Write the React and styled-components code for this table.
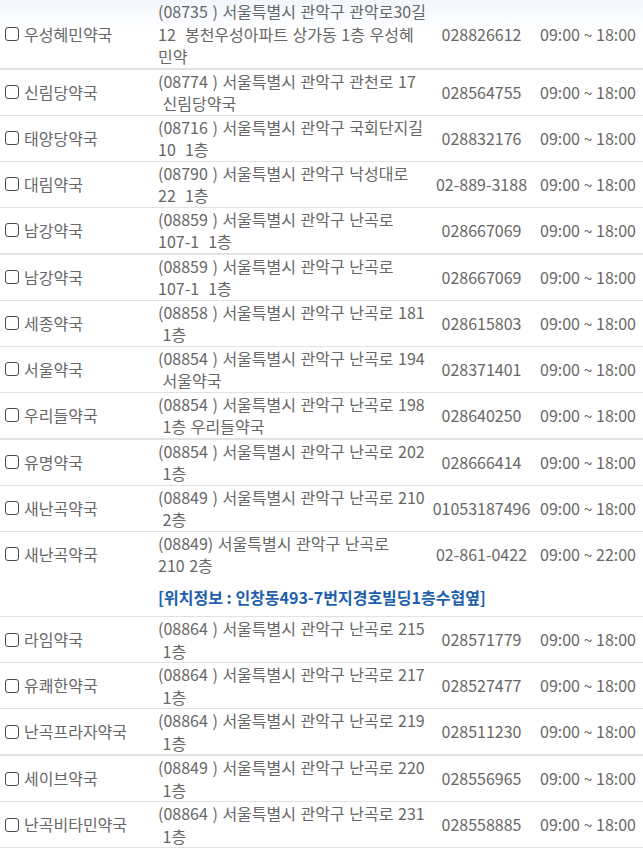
import React from "react";
import styled, { createGlobalStyle } from "styled-components";

const Global = createGlobalStyle`
  html, body { margin: 0; padding: 0; background: #fff; }
  body { font-family: "Noto Sans CJK KR", "Noto Sans", sans-serif; }
`;

const Wrap = styled.div`
  width: 643px;
  background: linear-gradient(to bottom, #f2f7fd 0px, #f7fafe 14px, rgba(255, 255, 255, 0) 30px) no-repeat;
`;

const Table = styled.table`
  width: 643px;
  border-collapse: collapse;
  table-layout: fixed;
  color: #676767;
  font-size: 16px;
  line-height: 22.5px;
`;

const Row = styled.tr`
  border-bottom: ${(p) => (p.$noBorder ? "none" : p.$thick ? "2px solid #e2e2e2" : "1px solid #e2e2e2")};
`;

const NameCell = styled.td`
  width: 150px;
  padding: 0 0 0 5px;
  vertical-align: middle;
  white-space: nowrap;
`;

const NameInner = styled.label`
  display: flex;
  align-items: center;
  gap: 5px;
`;

const Check = styled.input.attrs({ type: "checkbox" })`
  appearance: none;
  margin: 0;
  width: 14px;
  height: 14px;
  border: 1.5px solid #4a4a4a;
  border-radius: 3px;
  background: #fff;
  box-sizing: border-box;
  flex: none;
`;

const AddrCell = styled.td`
  width: 272px;
  padding: 0 0 0 3px;
  vertical-align: middle;
  word-spacing: 1px;
`;

const Line = styled.div`
  white-space: pre;
`;

const PhoneCell = styled.td`
  width: 103px;
  padding: 0;
  text-align: center;
  vertical-align: middle;
  white-space: nowrap;
`;

const HoursCell = styled.td`
  padding: 0;
  text-align: center;
  vertical-align: middle;
  white-space: nowrap;
`;

const NoteCell = styled.td`
  padding: 9px 0 8px 3px;
  color: #1d5fae;
  font-weight: 700;
  white-space: nowrap;
`;

const data = [
  { name: "우성혜민약국", addr: ["(08735 ) 서울특별시 관악구 관악로30길", "12  봉천우성아파트 상가동 1층 우성혜", "민약"], phone: "028826612", thick: true },
  { name: "신림당약국", addr: ["(08774 ) 서울특별시 관악구 관천로 17", " 신림당약국"], phone: "028564755" },
  { name: "태양당약국", addr: ["(08716 ) 서울특별시 관악구 국회단지길", "10  1층"], phone: "028832176" },
  { name: "대림약국", addr: ["(08790 ) 서울특별시 관악구 낙성대로", "22  1층"], phone: "02-889-3188" },
  { name: "남강약국", addr: ["(08859 ) 서울특별시 관악구 난곡로", "107-1  1층"], phone: "028667069", thick: true },
  { name: "남강약국", addr: ["(08859 ) 서울특별시 관악구 난곡로", "107-1  1층"], phone: "028667069" },
  { name: "세종약국", addr: ["(08858 ) 서울특별시 관악구 난곡로 181", " 1층"], phone: "028615803" },
  { name: "서울약국", addr: ["(08854 ) 서울특별시 관악구 난곡로 194", " 서울약국"], phone: "028371401" },
  { name: "우리들약국", addr: ["(08854 ) 서울특별시 관악구 난곡로 198", " 1층 우리들약국"], phone: "028640250", thick: true },
  { name: "유명약국", addr: ["(08854 ) 서울특별시 관악구 난곡로 202", " 1층"], phone: "028666414" },
  { name: "새난곡약국", addr: ["(08849 ) 서울특별시 관악구 난곡로 210", " 2층"], phone: "01053187496" },
  { name: "새난곡약국", addr: ["(08849) 서울특별시 관악구 난곡로", "210 2층"], phone: "02-861-0422", hours: "09:00 ~ 22:00", note: "[위치정보 : 인창동493-7번지경호빌딩1층수협옆]" },
  { name: "라임약국", addr: ["(08864 ) 서울특별시 관악구 난곡로 215", " 1층"], phone: "028571779" },
  { name: "유쾌한약국", addr: ["(08864 ) 서울특별시 관악구 난곡로 217", " 1층"], phone: "028527477" },
  { name: "난곡프라자약국", addr: ["(08864 ) 서울특별시 관악구 난곡로 219", " 1층"], phone: "028511230", thick: true },
  { name: "세이브약국", addr: ["(08849 ) 서울특별시 관악구 난곡로 220", " 1층"], phone: "028556965" },
  { name: "난곡비타민약국", addr: ["(08864 ) 서울특별시 관악구 난곡로 231", " 1층"], phone: "028558885" },
];

export default function App() {
  return (
    <Wrap>
      <Global />
      <Table>
        <tbody>
          {data.map((d, i) => (
            <React.Fragment key={i}>
              <Row $thick={d.thick} $noBorder={!!d.note}>
                <NameCell>
                  <NameInner>
                    <Check />
                    <span>{d.name}</span>
                  </NameInner>
                </NameCell>
                <AddrCell>
                  {d.addr.map((l, j) => (
                    <Line key={j}>{l}</Line>
                  ))}
                </AddrCell>
                <PhoneCell>{d.phone}</PhoneCell>
                <HoursCell>{d.hours || "09:00 ~ 18:00"}</HoursCell>
              </Row>
              {d.note && (
                <Row>
                  <td />
                  <NoteCell colSpan={3}>{d.note}</NoteCell>
                </Row>
              )}
            </React.Fragment>
          ))}
        </tbody>
      </Table>
    </Wrap>
  );
}
